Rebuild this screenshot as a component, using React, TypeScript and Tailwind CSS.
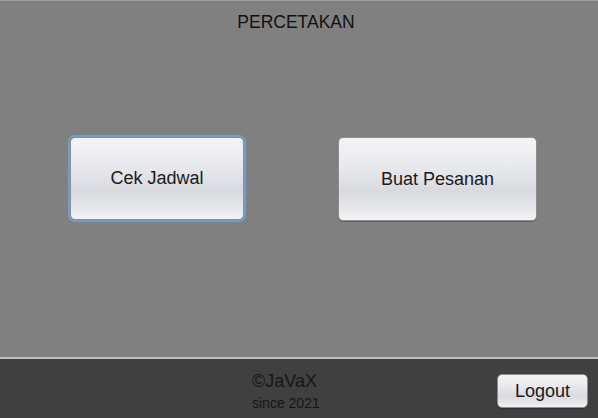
export default function App() {
  const btn =
    "flex items-center justify-center rounded-[5px] border border-[#8e8e8e] bg-[linear-gradient(to_bottom,#f4f4f6_0%,#e8e9ed_35%,#d8dae0_65%,#e6e8ec_88%,#f2f3f5_100%)] text-[18px] text-[#1a1a1a] shadow-[0_1px_1px_rgba(0,0,0,0.25)]";
  return (
    <div className="flex h-[418px] w-[598px] flex-col bg-[#808080] font-['Liberation_Sans',Arial,sans-serif]">
      <main className="flex h-[357px] flex-col border-t border-[#9c9c9c]">
        <h1 className="mt-[11px] pr-[6px] text-center text-[17.5px] leading-[20px] text-[#111]">PERCETAKAN</h1>
        <div className="mt-[105px] flex items-start pl-[70px]">
          <button className={`${btn} h-[83px] w-[174px] ring-2 ring-[#6f9fd2]`}>Cek Jadwal</button>
          <button className={`${btn} ml-[94px] h-[84px] w-[199px]`}>Buat Pesanan</button>
        </div>
      </main>
      <footer className="flex flex-1 items-start border-t-2 border-[#bfbfbf] bg-[#404040]">
        <div className="mt-[11px] flex flex-col pl-[252px] text-[#161616]">
          <span className="text-[18px] leading-[22px]">©JaVaX</span>
          <span className="mt-[3px] text-[14px] leading-[16px]">since 2021</span>
        </div>
        <button className={`${btn} ml-auto mr-[10px] mt-[15px] h-[34px] w-[91px]`}>Logout</button>
      </footer>
    </div>
  );
}
